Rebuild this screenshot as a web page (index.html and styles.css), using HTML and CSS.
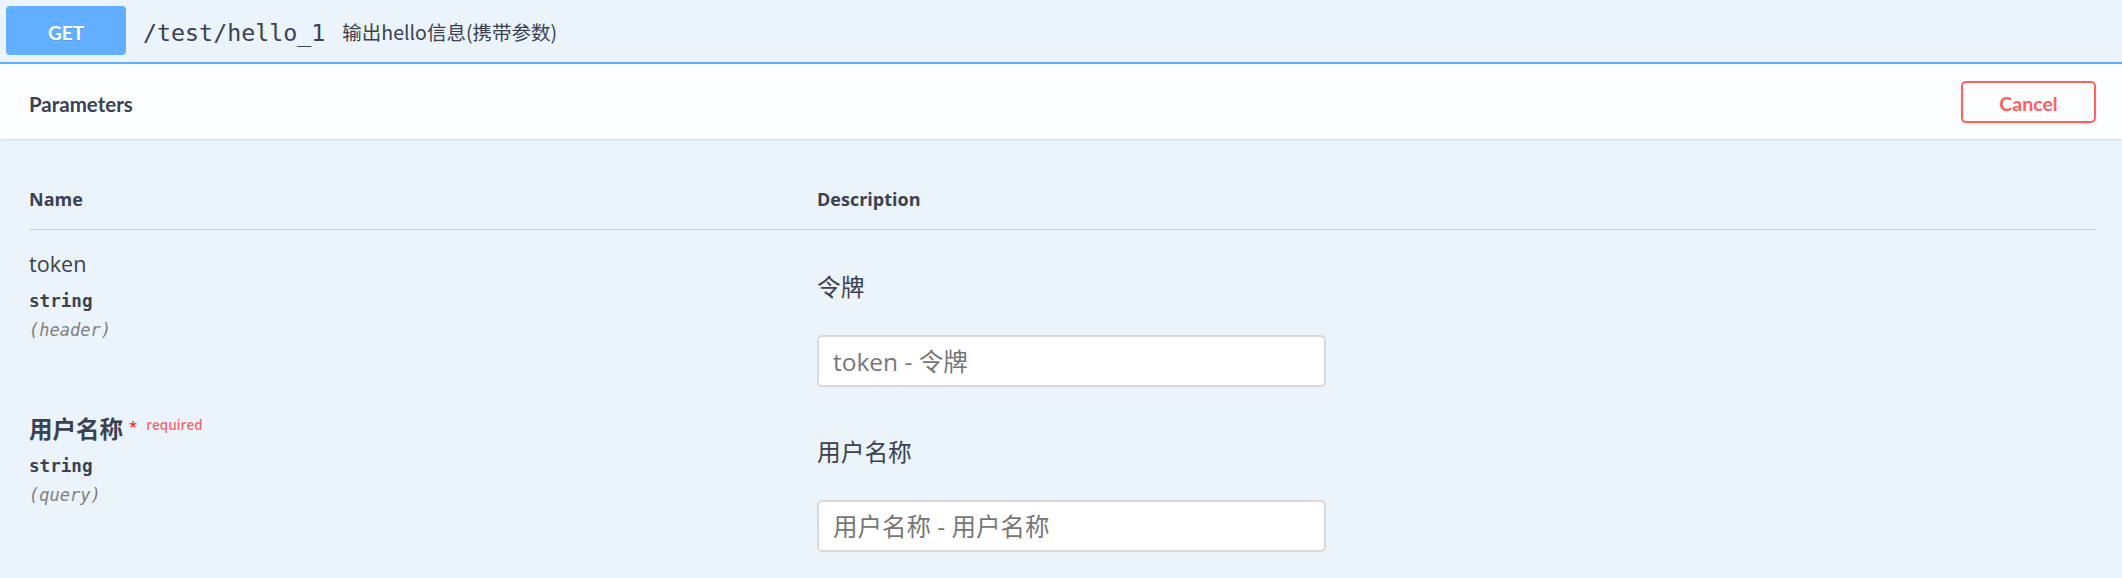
FILE: index.html
```html
<!DOCTYPE html>
<html lang="zh">
<head>
<meta charset="utf-8">
<title>GET /test/hello_1</title>
<link rel="stylesheet" href="styles.css">
</head>
<body>
<div class="opblock">
  <div class="summary">
    <span class="method">GET</span>
    <span class="path">/test/hello_1</span>
    <span class="op-desc">输出hello信息(携带参数)</span>
  </div>
  <div class="section-header">
    <h4 class="section-title">Parameters</h4>
    <button class="cancel" type="button">Cancel</button>
  </div>
  <div class="table-container">
    <div class="params">
      <div class="th">Name</div>
      <div class="th">Description</div>

      <div class="col-name">
        <div class="param-name">token</div>
        <div class="param-type">string</div>
        <div class="param-in">(header)</div>
      </div>
      <div class="col-desc">
        <div class="desc-text">令牌</div>
        <input class="param-input" type="text" placeholder="token - 令牌">
      </div>

      <div class="col-name">
        <div class="param-name required">用户名称<span class="star">*</span><span class="req">required</span></div>
        <div class="param-type">string</div>
        <div class="param-in">(query)</div>
      </div>
      <div class="col-desc">
        <div class="desc-text">用户名称</div>
        <input class="param-input" type="text" placeholder="用户名称 - 用户名称">
      </div>
    </div>
  </div>
</div>
</body>
</html>
```
FILE: styles.css
```css
* { box-sizing: border-box; }
html, body { margin: 0; padding: 0; }
body {
  background: #ebf3fb;
  color: #3b4151;
  font-family: "Open Sans", "Noto Sans CJK SC", sans-serif;
  min-height: 578px;
}

.summary {
  display: flex;
  align-items: center;
  height: 64px;
  padding: 6px 6px 7px;
  border-bottom: 2px solid #61affe;
}
.method {
  display: flex;
  align-items: center;
  justify-content: center;
  width: 120px;
  height: 49px;
  padding-top: 3px;
  background: #61affe;
  border-radius: 4px;
  color: #fff;
  font: 700 19px Lato, sans-serif;
  text-shadow: 0 1px 0 rgba(0,0,0,.1);
}
.path {
  margin-left: 17px;
  padding-top: 4px;
  font-family: "DejaVu Sans Mono", monospace;
  font-size: 23.3px;
  color: #3b4151;
}
.op-desc {
  margin-left: 17px;
  padding-top: 2px;
  font-family: "Noto Sans CJK SC", sans-serif;
  font-size: 19.5px;
  color: #3b4151;
}

.section-header {
  display: flex;
  align-items: center;
  justify-content: space-between;
  height: 75px;
  padding: 0 26px 0 29px;
  background: rgba(255,255,255,.8);
  box-shadow: 0 1px 2px rgba(0,0,0,.1);
}
.section-title {
  margin: 0;
  padding-top: 5px;
  font: 700 20.5px/24px Lato, sans-serif;
  color: #3b4151;
}
.cancel {
  width: 135px;
  height: 42px;
  padding: 3px 0 0;
  border: 2px solid #ff6060;
  border-radius: 5px;
  background: transparent;
  color: #ff6060;
  font: 700 19.5px/23px Lato, sans-serif;
  box-shadow: 0 1px 2px rgba(0,0,0,.1);
}

.table-container {
  padding: 37px 26px 0 29px;
}
.params {
  display: grid;
  grid-template-columns: 788px 1fr;
}
.th {
  padding: 12px 0 19px;
  border-bottom: 1px solid rgba(59,65,81,.2);
  font: 700 18px/22px "Open Sans", sans-serif;
  color: #3b4151;
}
.col-name {
  padding-top: 19px;
}
.param-name {
  font-size: 21.6px;
  line-height: 30px;
  color: #3b4151;
}
.param-name.required {
  font-weight: 700;
  font-size: 23.5px;
}
.star {
  margin-left: 6px;
  font-size: 15px;
  font-weight: 400;
  line-height: 0;
  color: #f00;
  vertical-align: 6px;
}
.req {
  margin-left: 9px;
  font-size: 13.5px;
  font-weight: 600;
  line-height: 0;
  color: rgba(255,0,0,.6);
  vertical-align: 8px;
}
.param-type {
  margin-top: 10px;
  font: 700 17.6px/24px "DejaVu Sans Mono", monospace;
  color: #3b4151;
}
.param-in {
  margin-top: 5px;
  font: italic 17px/24px "DejaVu Sans Mono", monospace;
  color: #808080;
}
.col-desc {
  padding: 42px 0 8px;
}
.desc-text {
  font-size: 23.7px;
  line-height: 30px;
  color: #3b4151;
}
.param-input {
  display: block;
  width: 509px;
  height: 52px;
  margin-top: 33px;
  padding: 0 14px;
  border: 2px solid #d9d9d9;
  border-radius: 5px;
  background: #fff;
  font: 24.5px "Open Sans", "Noto Sans CJK SC", sans-serif;
  color: #3b4151;
  outline: none;
}
.param-input::placeholder {
  color: #777;
}
```
